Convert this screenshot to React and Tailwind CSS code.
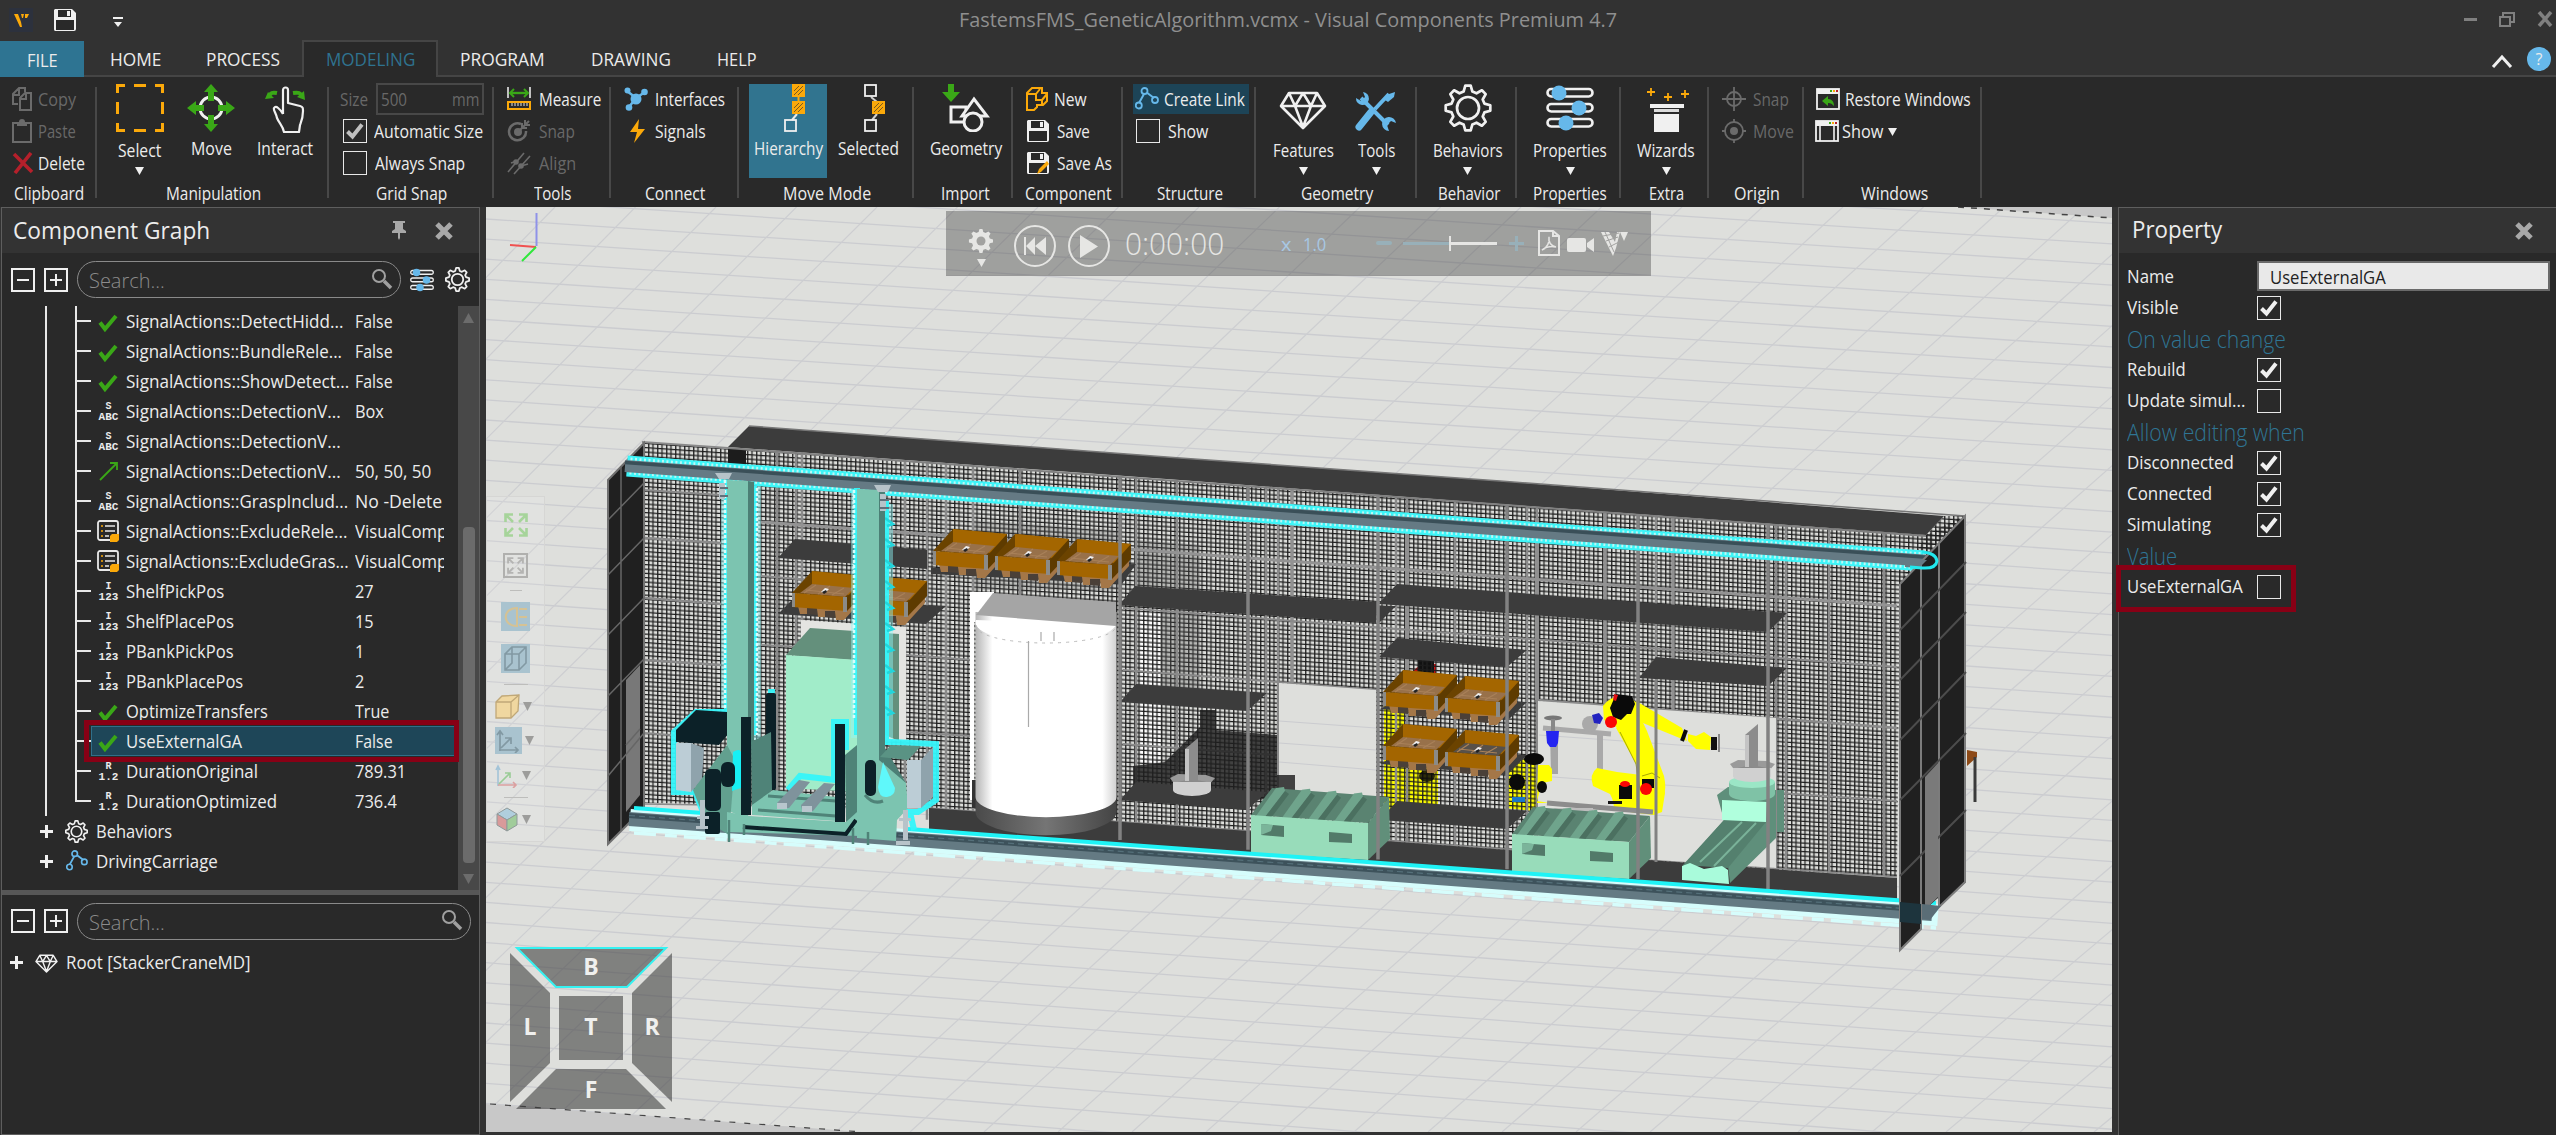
import React, { useLayoutEffect, useRef, useState } from "react";

/* Text squeezed or stretched horizontally to fill the width set by its classes. */
function T({ className = "", children }) {
  const outer = useRef(null);
  const inner = useRef(null);
  const [scale, setScale] = useState(1);
  useLayoutEffect(() => {
    if (outer.current && inner.current && inner.current.offsetWidth) {
      setScale(outer.current.clientWidth / inner.current.offsetWidth);
    }
  }, [children]);
  return (
    <span ref={outer} className={"block shrink-0 whitespace-nowrap " + className}>
      <span ref={inner} className="inline-block origin-left" style={{ transform: `scaleX(${scale})` }}>
        {children}
      </span>
    </span>
  );
}

/* ---------- icons ---------- */
const Svg = ({ s = 24, w, h, vb, children, className = "" }) => (
  <svg width={w || s} height={h || s} viewBox={vb || `0 0 ${w || s} ${h || s}`} className={"shrink-0 " + className} fill="none">
    {children}
  </svg>
);

const SaveIcon = ({ pencil }) => (
  <Svg>
    <path d="M2 1h17l4 4v16a2 2 0 0 1-2 2H2a2 2 0 0 1-1-2V2z" fill="#f0f0f0" />
    <rect x="5" y="2" width="13" height="7" fill="#292929" />
    <rect x="14" y="3" width="3" height="5" fill="#f0f0f0" />
    <rect x="3" y="12" width="18" height="10" fill="#292929" />
    {pencil && <path d="M11 23l2-5 8-8 2 3-8 8z" fill="#fba90a" />}
  </Svg>
);

const CopyIcon = () => (
  <Svg w={20} h={24}>
    <path d="M6 17H1V7l6-6h6v4M1 8h6V1M8 23V11l5-5h6v17zM8 12h6V6" stroke="#6b6b6b" strokeWidth="2" />
  </Svg>
);
const PasteIcon = () => (
  <Svg w={20} h={24}>
    <path d="M1 4h18v19H1z" stroke="#6b6b6b" strokeWidth="2" />
    <path d="M5 3h2a3 3 0 0 1 6 0h2v4H5z" fill="#6b6b6b" />
  </Svg>
);
const DeleteIcon = () => (
  <Svg w={22} h={22}>
    <path d="M2 2l18 18M19 1L3 21" stroke="#b5202b" strokeWidth="3.600" />
  </Svg>
);
const SelectIcon = () => (
  <Svg s={48}>
    <path d="M1.500 9V1.500H9M18 1.500h12M39 1.500h7.500V9M46.500 18v12M46.500 39v7.500H39M30 46.500H18M9 46.500H1.500V39M1.500 30V18" stroke="#fba90a" strokeWidth="3" />
  </Svg>
);
const MoveIcon = () => (
  <Svg s={48}>
    <circle cx="24" cy="24" r="11" stroke="#f0f0f0" strokeWidth="3" />
    <path d="M24 0l7 8h-4v9h-6V8h-4zM24 48l7-8h-4v-9h-6v9h-4zM0 24l9-7v4h8v6H9v4zM48 24l-9-7v4h-8v6h8v4z" fill="#3aa717" />
  </Svg>
);
const InteractIcon = () => (
  <Svg s={48} className="translate-x-[3px] translate-y-[1px]">
    <path d="M19 29V5a2.500 2.500 0 0 1 5 0v13l12 3c3 1 3 2 3 5 0 7-1 9-3 14l-1 7H20c-1-6-5-9-7-14-1-5-4-8-3-10 2-3 6 1 9 6" stroke="#f0f0f0" strokeWidth="2.200" strokeLinejoin="round" />
    <path d="M13 8C8 7 7 8 5 11M29 8c6-1 7 0 9 3" stroke="#3aa717" strokeWidth="4" />
    <path d="M1 14l3-7 6 6zM41 15l-1-9-7 6z" fill="#3aa717" />
  </Svg>
);
const MeasureIcon = () => (
  <Svg>
    <path d="M1 0v11M23 0v11" stroke="#e8e8e8" strokeWidth="1.600" />
    <path d="M4 6h16" stroke="#3aa717" strokeWidth="2.400" />
    <path d="M7 2L3 6l4 4M17 2l4 4-4 4" stroke="#3aa717" strokeWidth="2" />
    <rect x="1" y="15" width="22" height="7" stroke="#fba90a" strokeWidth="2" />
    <path d="M5 16v3M8 16v3M11 16v3M14 16v3M17 16v3M20 16v3" stroke="#e8e8e8" />
  </Svg>
);
const TargetSnapIcon = () => (
  <Svg>
    <path d="M14 5a8.500 8.500 0 1 0 5 7" stroke="#6b6b6b" strokeWidth="2.500" />
    <circle cx="11" cy="13" r="4" fill="#6b6b6b" />
    <path d="M12 12L22 2M15 4v5h5M18 1v5h5" stroke="#6b6b6b" strokeWidth="2" />
  </Svg>
);
const AlignIcon = () => (
  <Svg>
    <path d="M1 21L17 2M7 23L23 5" stroke="#6b6b6b" strokeWidth="1.600" />
    <path d="M4 12l6-2M14 15l7-2" stroke="#6b6b6b" strokeWidth="1.600" />
    <circle cx="9" cy="11" r="2.800" fill="#6b6b6b" />
    <circle cx="14" cy="15" r="2.800" fill="#6b6b6b" />
  </Svg>
);
const InterfacesIcon = () => (
  <Svg>
    <path d="M3 4l9 7 9-6M12 11L5 20" stroke="#66b8ea" strokeWidth="2.500" />
    <circle cx="12" cy="12" r="5.500" fill="#66b8ea" />
    <circle cx="3.500" cy="3.500" r="3" fill="#66b8ea" />
    <circle cx="20.500" cy="5" r="3.300" fill="#66b8ea" />
    <circle cx="5" cy="20.500" r="3.300" fill="#66b8ea" />
  </Svg>
);
const SignalIcon = () => (
  <Svg>
    <path d="M15 0L6 13h7l-3 11 11-14h-7z" fill="#fba90a" />
  </Svg>
);
const Hatch = ({ x, y }) => (
  <g>
    <rect x={x} y={y} width="13" height="13" fill="#fba90a" />
    <path d={`M${x + 2} ${y + 7}l5-5M${x + 2} ${y + 11}l9-9M${x + 6} ${y + 11}l5-5`} stroke="#7a5a20" />
  </g>
);
const HierarchyIcon = () => (
  <Svg s={48}>
    <path d="M34.500 13v5" stroke="#fba90a" strokeWidth="2" />
    <path d="M33 30l-5 6" stroke="#e8e8e8" strokeWidth="2" />
    <Hatch x={28} y={0} />
    <Hatch x={28} y={17} />
    <rect x="21" y="36" width="11" height="11" stroke="#f0f0f0" strokeWidth="1.800" />
  </Svg>
);
const SelectedIcon = () => (
  <Svg s={48}>
    <path d="M27 13l6 5M33 30l-5 6" stroke="#cfcfcf" strokeWidth="2" />
    <rect x="21" y="1" width="11" height="11" stroke="#f0f0f0" strokeWidth="1.800" />
    <Hatch x={28} y={17} />
    <rect x="21" y="36" width="11" height="11" stroke="#f0f0f0" strokeWidth="1.800" />
  </Svg>
);
const GeometryIcon = () => (
  <Svg s={48}>
    <path d="M4 0h6v8h6L7 18-2 8h6z" fill="#3aa717" transform="translate(2)" />
    <rect x="9" y="23" width="15" height="15" stroke="#f0f0f0" strokeWidth="3" />
    <path d="M32 15L20 32h25z" fill="#292929" stroke="#f0f0f0" strokeWidth="3" />
    <circle cx="31" cy="38" r="9" fill="#292929" stroke="#f0f0f0" strokeWidth="3" />
  </Svg>
);
const NewIcon = () => (
  <Svg w={22} h={24}>
    <path d="M1 23V6l5-5h10v5h5v8l-4 4h-6v2l-3 3zM1 7h9v6h6v5M10 7l4-5M16 13l5-6" stroke="#fba90a" strokeWidth="2" />
  </Svg>
);
const LinkIcon = ({ s = 24, fill = "#1d4457" }) => (
  <Svg s={s} vb="0 0 24 24">
    <path d="M4 16L9 7M11 5l8 6" stroke="#66b8ea" strokeWidth="2" />
    <circle cx="9.500" cy="4" r="3" stroke="#66b8ea" strokeWidth="1.800" fill={fill} />
    <circle cx="3.800" cy="18.500" r="3" stroke="#66b8ea" strokeWidth="1.800" />
    <circle cx="20" cy="13" r="3" stroke="#66b8ea" strokeWidth="1.800" />
  </Svg>
);
const DiamondIcon = ({ s = 48, sw = 2.6 }) => (
  <Svg s={s} vb="0 0 48 48">
    <path d="M10 9h28l8 13-22 22L2 22zM2 22h44M16 22l8 21 8-21M10 9l6 13 8-13 8 13 6-13" stroke="#f0f0f0" strokeWidth={sw} strokeLinejoin="round" />
  </Svg>
);
const ToolsIcon = () => (
  <Svg s={48} className="-translate-x-[1px]">
    <path d="M10 14l27 27M38 10L24 25" stroke="#66b8ea" strokeWidth="4" />
    <path d="M20 28L8 43" stroke="#66b8ea" strokeWidth="7" strokeLinecap="round" />
    <path d="M44 8l-6 2-4 6 3 2 6-5z" fill="#66b8ea" />
    <path d="M12 8a6.500 6.500 0 1 1-7 6l5 3 4-4z" fill="#66b8ea" />
    <path d="M38 47a7 7 0 1 1 7-8l-5-2-4 4z" fill="#66b8ea" />
  </Svg>
);
const gearPath = (() => {
  const pts = [];
  const n = 8;
  for (let i = 0; i < n; i++) {
    const a = (i * Math.PI * 2) / n - Math.PI / 2;
    [[-0.26, 17], [-0.12, 22.5], [0.12, 22.5], [0.26, 17]].forEach(([d, r]) => {
      pts.push(`${(24 + Math.cos(a + d) * r).toFixed(1)} ${(24 + Math.sin(a + d) * r).toFixed(1)}`);
    });
  }
  return "M" + pts.join("L") + "z";
})();
const GearIcon = ({ s = 48, sw = 2.7 }) => (
  <Svg s={s} vb="0 0 48 48">
    <path d={gearPath} stroke="#f0f0f0" strokeWidth={sw} strokeLinejoin="round" />
    <circle cx="24" cy="24" r="11" stroke="#f0f0f0" strokeWidth={sw} />
  </Svg>
);
const SlidersIcon = ({ s = 48 }) => (
  <Svg s={s} vb="0 0 48 48">
    {[9, 24, 39].map((y) => (
      <rect key={y} x="1.500" y={y - 4} width="45" height="7.500" rx="3.700" stroke="#f0f0f0" strokeWidth="2.600" />
    ))}
    <circle cx="13" cy="9" r="7.500" fill="#66b8ea" />
    <circle cx="33" cy="24" r="7.500" fill="#66b8ea" />
    <circle cx="20" cy="39" r="7.500" fill="#66b8ea" />
  </Svg>
);
const WizardIcon = () => (
  <Svg s={48}>
    <path d="M9 4v8M5 8h8M26 9v8M22 13h8M43 6v8M39 10h8" stroke="#fba90a" strokeWidth="1.800" />
    <rect x="8" y="20" width="34" height="4" fill="#f0f0f0" />
    <rect x="12" y="25" width="25" height="3" fill="#dcdcdc" />
    <rect x="12" y="30" width="25" height="18" fill="#f0f0f0" />
  </Svg>
);
const OriginIcon = ({ dot }) => (
  <Svg>
    <circle cx="12" cy="12" r={dot ? 9 : 7} stroke="#6b6b6b" strokeWidth="1.800" />
    {dot ? <path d="M12 0v4M12 20v4M0 12h4M20 12h4" stroke="#6b6b6b" strokeWidth="1.800" /> : <path d="M12 0v24M0 12h24" stroke="#6b6b6b" strokeWidth="1.800" />}
    {dot && <circle cx="12" cy="12" r="4" fill="#6b6b6b" />}
  </Svg>
);
const WindowIcon = ({ show }) => (
  <Svg>
    <rect x="1" y="2" width="22" height="20" stroke="#f0f0f0" strokeWidth="1.800" />
    <rect x="1" y="2" width="22" height="5" fill="#f0f0f0" />
    <rect x="14" y="3" width="2" height="2" fill="#3aa717" />
    <rect x="17" y="3" width="2" height="2" fill="#fba90a" />
    <rect x="20" y="3" width="2" height="2" fill="#b5202b" />
    {show ? <path d="M5 7v15M19 7v15" stroke="#f0f0f0" strokeWidth="1.600" /> : <path d="M6 14l6-5v3c4 0 6 3 6 7-2-2-3-3-6-3v3z" fill="#3aa717" />}
  </Svg>
);
const Caret = ({ className = "" }) => (
  <svg width="9" height="8" viewBox="0 0 9 8" className={"shrink-0 " + className}>
    <path d="M0 0h9L4.500 8z" fill="#f0f0f0" />
  </svg>
);
const Magnifier = () => (
  <Svg s={22} className="-mt-1">
    <circle cx="8" cy="8" r="6" stroke="#a0a0a0" strokeWidth="2" />
    <path d="M13 13l7 7" stroke="#a0a0a0" strokeWidth="3.500" />
  </Svg>
);
const CloseX = () => (
  <Svg s={18}>
    <path d="M2 2l14 14M16 2L2 16" stroke="#a8a8a8" strokeWidth="5" />
  </Svg>
);
const GreenCheck = () => (
  <Svg w={21} h={20} className="translate-x-[1px] translate-y-[1.5px]">
    <path d="M2 10l5 6.500L18 3.500" stroke="#3aa717" strokeWidth="4" />
  </Svg>
);

/* ---------- small controls ---------- */
function Check({ on, dim }) {
  return (
    <span className="flex h-6 w-6 shrink-0 items-center justify-center border-[1.5px] border-[#e8e8e8]">
      {on && (
        <svg width="18" height="18" viewBox="0 0 18 18" fill="none">
          <path d="M1.500 9.500l5 5L16 2.500" stroke={dim ? "#c0c0c0" : "#f0f0f0"} strokeWidth="4" />
        </svg>
      )}
    </span>
  );
}

function Group({ className, label, children }) {
  return (
    <section className={"flex h-[130px] shrink-0 " + className}>
      <div className="flex min-w-0 flex-1 flex-col">
        <div className="flex h-[103px]">{children}</div>
        <div className="flex h-[26px] items-center justify-center pl-[2px]">{label}</div>
      </div>
      <div className="mt-[10px] h-[111px] w-[2px] shrink-0 bg-[#484848]" />
    </section>
  );
}

function Big({ className, icon, caret, active, children }) {
  return (
    <div className={"mt-[7px] flex h-[94px] shrink-0 flex-col items-center " + (active ? "bg-[#31748f] " : "") + className}>
      {icon}
      <div className={caret ? "mt-[6px] flex h-6 items-center" : "mt-[4px] flex h-6 items-center"}>{children}</div>
      {caret && <Caret className="mt-[5px]" />}
    </div>
  );
}

const Row = ({ className = "", children }) => <div className={"flex h-[32.3px] items-center " + className}>{children}</div>;
const Rows = ({ className = "", children }) => <div className={"flex flex-col pt-[5.5px] " + className}>{children}</div>;

/* ---------- top bars ---------- */
function TitleBar() {
  return (
    <header className="flex h-[40px] items-center">
      <div className="ml-[9px] flex h-6 w-6 items-center justify-center bg-[#2c313d]">
        <svg width="18" height="18" viewBox="0 0 18 18">
          <path d="M2 3h4l3 8 1 5H8zM9 3h3l-1 4h-1zM13 3h4l-2 4h-2z" fill="#fba90a" />
        </svg>
      </div>
      <div className="ml-5 flex"><SaveIcon /></div>
      <svg width="10" height="10" viewBox="0 0 10 10" className="ml-9 mt-1">
        <path d="M0 0h10v2H0zM1 5h8L5 10z" fill="#f0f0f0" />
      </svg>
      <div className="ml-[836px] text-xl text-[#8f8f8f]">
        <T className="w-[658px]">FastemsFMS_GeneticAlgorithm.vcmx - Visual Components Premium 4.7</T>
      </div>
      <div className="ml-auto mr-[3px] flex items-center gap-[22px] pb-[2px]">
        <div className="h-[3px] w-[13px] bg-[#808080]" />
        <svg width="16" height="16" viewBox="0 0 16 16" fill="none" stroke="#808080">
          <path d="M4 5V2h11v9h-3" strokeWidth="2" />
          <rect x="1" y="6" width="10" height="9" strokeWidth="2" />
        </svg>
        <svg width="16" height="16" viewBox="0 0 16 16" fill="none">
          <path d="M2 1l12 14M14 1L2 15" stroke="#808080" strokeWidth="3.500" />
        </svg>
      </div>
    </header>
  );
}

function Tabs() {
  return (
    <nav className="flex h-[37px] items-stretch text-lg">
      <div className="mt-px flex w-[84px] items-center justify-center bg-[#2e7492] pt-[2px]"><T className="w-[31px]">FILE</T></div>
      <div className="flex flex-1 items-center border-b-2 border-[#454545] pl-[26px] pt-[2px]">
        <T className="w-[51px]">HOME</T>
        <T className="ml-[45px] w-[74px]">PROCESS</T>
      </div>
      <div className="-mb-[1px] flex w-[136px] shrink-0 items-center justify-center border-2 border-b-0 border-[#454545] bg-[#292929] pb-[2px] text-[#2f7390]">
        <T className="w-[89px]">MODELING</T>
      </div>
      <div className="flex w-[2118px] shrink-0 items-center border-b-2 border-[#454545] pl-[22px] pt-[2px]">
        <T className="w-[85px]">PROGRAM</T>
        <T className="ml-[46px] w-[80px]">DRAWING</T>
        <T className="ml-[46px] w-[40px]">HELP</T>
        <svg width="22" height="14" viewBox="0 0 22 14" fill="none" className="ml-auto mt-1">
          <path d="M2 13l9-10 9 10" stroke="#f0f0f0" strokeWidth="3" />
        </svg>
        <div className="ml-[14px] mr-[5px] flex h-6 w-6 items-center justify-center rounded-full bg-[#66b8ea] text-base">?</div>
      </div>
    </nav>
  );
}

function Ribbon() {
  return (
    <div className="flex h-[130px] bg-[#292929] text-[17.5px]">
      <Group className="w-[97px]" label={<T className="w-[70px]">Clipboard</T>}>
        <Rows className="pl-3">
          <Row className="text-[#686868]"><CopyIcon /><T className="ml-[6px] w-[38px]">Copy</T></Row>
          <Row className="text-[#686868]"><PasteIcon /><T className="ml-[6px] w-[38px]">Paste</T></Row>
          <Row><DeleteIcon /><T className="ml-1 w-[47px]">Delete</T></Row>
        </Rows>
      </Group>
      <Group className="w-[232px]" label={<T className="w-[95px]">Manipulation</T>}>
        <Big className="w-[85px]" icon={<SelectIcon />} caret><T className="w-[43px]">Select</T></Big>
        <Big className="w-[58px]" icon={<MoveIcon />}><T className="w-[41px]">Move</T></Big>
        <Big className="w-[90px]" icon={<InteractIcon />}><T className="w-[56px]">Interact</T></Big>
      </Group>
      <Group className="w-[165px]" label={<T className="w-[71px]">Grid Snap</T>}>
        <Rows className="pl-[11px]">
          <Row className="text-[#686868]">
            <T className="w-[28px]">Size</T>
            <div className="ml-2 flex h-8 w-[108px] items-center justify-between border-2 border-[#484848] px-[3px]">
              <T className="w-[26px]">500</T><T className="w-[27px]">mm</T>
            </div>
          </Row>
          <Row className="pl-[3px]"><Check on dim /><T className="ml-[7px] w-[109px]">Automatic Size</T></Row>
          <Row className="pl-[3px]"><Check /><T className="ml-2 w-[90px]">Always Snap</T></Row>
        </Rows>
      </Group>
      <Group className="w-[117px]" label={<T className="w-[37px]">Tools</T>}>
        <Rows className="pl-[13px]">
          <Row><MeasureIcon /><T className="ml-2 w-[62px]">Measure</T></Row>
          <Row className="text-[#686868]"><TargetSnapIcon /><T className="ml-2 w-[36px]">Snap</T></Row>
          <Row className="text-[#686868]"><AlignIcon /><T className="ml-2 w-[37px]">Align</T></Row>
        </Rows>
      </Group>
      <Group className="w-[128px]" label={<T className="w-[60px]">Connect</T>}>
        <Rows className="pl-[13px]">
          <Row><InterfacesIcon /><T className="ml-[7px] w-[70px]">Interfaces</T></Row>
          <Row><SignalIcon /><T className="ml-[7px] w-[51px]">Signals</T></Row>
        </Rows>
      </Group>
      <Group className="w-[175px]" label={<T className="w-[88px]">Move Mode</T>}>
        <Big active className="ml-[10px] w-[78px]" icon={<HierarchyIcon />}><T className="w-[69px]">Hierarchy</T></Big>
        <Big className="w-[82px]" icon={<SelectedIcon />}><T className="w-[61px]">Selected</T></Big>
      </Group>
      <Group className="w-[99px]" label={<T className="ml-1 w-[49px]">Import</T>}>
        <Big className="ml-[2px] w-[99px]" icon={<GeometryIcon />}><T className="w-[72px]">Geometry</T></Big>
      </Group>
      <Group className="w-[110px]" label={<T className="w-[87px]">Component</T>}>
        <Rows className="pl-[13px]">
          <Row><NewIcon /><T className="ml-[6px] w-[33px]">New</T></Row>
          <Row><SaveIcon /><T className="ml-[7px] w-[33px]">Save</T></Row>
          <Row><SaveIcon pencil /><T className="ml-[7px] w-[55px]">Save As</T></Row>
        </Rows>
      </Group>
      <Group className="w-[133px]" label={<T className="w-[66px]">Structure</T>}>
        <Rows className="pl-[10px]">
          <Row><div className="flex h-[30px] w-[116px] items-center bg-[#1d4457] pl-[2px]"><LinkIcon /><T className="ml-[5px] w-[81px]">Create Link</T></div></Row>
          <Row className="pl-[3px]"><Check /><T className="ml-2 w-[40px]">Show</T></Row>
        </Rows>
      </Group>
      <Group className="w-[161px]" label={<T className="w-[72px]">Geometry</T>}>
        <Big className="ml-[7px] w-[80px]" icon={<DiamondIcon />} caret><T className="w-[61px]">Features</T></Big>
        <Big className="w-[66px]" icon={<ToolsIcon />} caret><T className="w-[37px]">Tools</T></Big>
      </Group>
      <Group className="w-[100px]" label={<T className="ml-[3px] w-[62px]">Behavior</T>}>
        <Big className="ml-[2px] w-[97px]" icon={<GearIcon />} caret><T className="w-[70px]">Behaviors</T></Big>
      </Group>
      <Group className="w-[104px]" label={<T className="ml-[2px] w-[74px]">Properties</T>}>
        <Big className="w-[106px]" icon={<SlidersIcon />} caret><T className="w-[74px]">Properties</T></Big>
      </Group>
      <Group className="w-[88px]" label={<T className="ml-[2px] w-[35px]">Extra</T>}>
        <Big className="w-[90px]" icon={<WizardIcon />} caret><T className="w-[58px]">Wizards</T></Big>
      </Group>
      <Group className="w-[95px]" label={<T className="w-[46px]">Origin</T>}>
        <Rows className="pl-[13px] text-[#686868]">
          <Row><OriginIcon /><T className="ml-[7px] w-[36px]">Snap</T></Row>
          <Row><OriginIcon dot /><T className="ml-[7px] w-[41px]">Move</T></Row>
        </Rows>
      </Group>
      <Group className="w-[178px]" label={<T className="ml-[2px] w-[67px]">Windows</T>}>
        <Rows className="pl-[11px]">
          <Row className="pl-[1px]"><WindowIcon /><T className="ml-[5px] w-[126px]">Restore Windows</T></Row>
          <Row><WindowIcon show /><T className="ml-[3px] w-[41px]">Show</T><Caret className="ml-[5px] mt-[2px]" /></Row>
        </Rows>
      </Group>
    </div>
  );
}

/* ---------- component graph ---------- */
const TypeIcon = ({ top, bottom }) => (
  <span className="flex w-[21px] translate-x-[1px] translate-y-[1px] flex-col items-center font-['Liberation_Mono'] text-[10px] font-bold leading-[10px]">
    <span>{top}</span>
    <span className="text-[11px]">{bottom}</span>
  </span>
);
const ListIcon = () => (
  <Svg s={22}>
    <rect x="1" y="1" width="20" height="19" rx="2" stroke="#e8e8e8" strokeWidth="1.800" />
    <path d="M8 6h10M8 11h10M8 16h4" stroke="#e8e8e8" strokeWidth="1.600" />
    <path d="M4 6h2M4 11h2M4 16h2" stroke="#fba90a" strokeWidth="1.600" />
    <path d="M13 16l2-2h7v6l-2 2h-7z" fill="#fba90a" />
  </Svg>
);
const VectorIcon = () => (
  <Svg w={20} h={20} className="translate-x-[2px]">
    <path d="M1 19L18 2M11 2h7v7" stroke="#3aa717" strokeWidth="1.800" />
  </Svg>
);
const iconOf = {
  b: <GreenCheck />,
  s: <TypeIcon top="S" bottom="ABC" />,
  v: <VectorIcon />,
  l: <ListIcon />,
  i: <TypeIcon top="I" bottom="123" />,
  r: <TypeIcon top="R" bottom="1.2" />,
};
const tree = [
  ["b", "SignalActions::DetectHidd...", "w-[217px]", "False", "w-[38px]"],
  ["b", "SignalActions::BundleRele...", "w-[216px]", "False", "w-[38px]"],
  ["b", "SignalActions::ShowDetect...", "w-[223px]", "False", "w-[38px]"],
  ["s", "SignalActions::DetectionV...", "w-[215px]", "Box", "w-[29px]"],
  ["s", "SignalActions::DetectionV...", "w-[215px]", "", ""],
  ["v", "SignalActions::DetectionV...", "w-[215px]", "50, 50, 50", "w-[76px]"],
  ["s", "SignalActions::GraspInclud...", "w-[222px]", "No -Delete", "w-[87px]"],
  ["l", "SignalActions::ExcludeRele...", "w-[221px]", "VisualComp", "w-[92px]"],
  ["l", "SignalActions::ExcludeGras...", "w-[223px]", "VisualComp", "w-[92px]"],
  ["i", "ShelfPickPos", "w-[98px]", "27", "w-[19px]"],
  ["i", "ShelfPlacePos", "w-[108px]", "15", "w-[19px]"],
  ["i", "PBankPickPos", "w-[108px]", "1", "w-[9px]"],
  ["i", "PBankPlacePos", "w-[117px]", "2", "w-[9px]"],
  ["b", "OptimizeTransfers", "w-[142px]", "True", "w-[34px]"],
  ["b", "UseExternalGA", "w-[116px]", "False", "w-[38px]"],
  ["r", "DurationOriginal", "w-[132px]", "789.31", "w-[51px]"],
  ["r", "DurationOptimized", "w-[151px]", "736.4", "w-[42px]"],
];

function ExpandButtons() {
  return (
    <>
      <span className="ml-[9px] flex h-6 w-6 items-center justify-center border-2 border-[#f0f0f0]"><span className="h-[2px] w-3 bg-[#f0f0f0]" /></span>
      <span className="ml-[9px] flex h-6 w-6 items-center justify-center border-2 border-[#f0f0f0]">
        <svg width="12" height="12" viewBox="0 0 12 12"><path d="M5 0h2v5h5v2H7v5H5V7H0V5h5z" fill="#f0f0f0" /></svg>
      </span>
    </>
  );
}
function SearchBox({ className }) {
  return (
    <div className={"ml-[9px] flex h-[37px] items-center justify-between rounded-full border-[1.5px] border-[#8a8a8a] pl-[11px] pr-[7px] pt-[2px] text-[21px] font-light text-[#8c8c8c] " + className}>
      <T className="w-[76px]">Search...</T>
      <Magnifier />
    </div>
  );
}
const Plus = () => (
  <svg width="13" height="13" viewBox="0 0 13 13" className="shrink-0"><path d="M5 0h3v5h5v3H8v5H5V8H0V5h5z" fill="#f0f0f0" /></svg>
);

function ComponentGraph() {
  return (
    <aside className="ml-[1px] flex w-[479px] shrink-0 flex-col border border-[#5e5e5e] bg-[#292929] text-lg">
      <div className="flex h-[45px] shrink-0 items-center bg-[#333333] pb-[1px] pl-[11px] text-[23.5px]">
        <T className="w-[197px]">Component Graph</T>
        <svg width="16" height="20" viewBox="0 0 16 20" className="ml-[181px]">
          <path d="M2 1h12v2h-2v6l3 2v2H9v5l-1 2-1-2v-5H1v-2l3-2V3H2z" fill="#a8a8a8" />
        </svg>
        <div className="ml-[28px] mt-[1px]"><CloseX /></div>
      </div>
      <div className="flex h-[53px] shrink-0 items-center">
        <ExpandButtons />
        <SearchBox className="w-[324px]" />
        <div className="ml-[9px]"><SlidersIcon s={24} /></div>
        <div className="ml-[11px]"><GearIcon s={25} sw={3.4} /></div>
      </div>
      <div className="flex h-[584px] shrink-0">
        <div className="flex w-[456px] flex-col">
          {tree.map(([k, name, w, val, vw], i) => {
            const sel = name === "UseExternalGA";
            const last = i === tree.length - 1;
            return (
              <div key={i} className="relative flex h-[30px] shrink-0 items-center">
                <div className="ml-[43px] h-full w-[2px] self-start bg-[#e8e8e8]" />
                <div className={"ml-[28px] w-[2px] self-start bg-[#e8e8e8] " + (last ? "h-[16px]" : "h-full")} />
                <div className="h-[2px] w-[14px] bg-[#e8e8e8]" />
                <div className={"flex h-full w-[363px] items-center border-y border-l pl-[5px] " + (sel ? "border-[#2f6f8a] bg-[#1e4658]" : "border-transparent")}>
                  <div className="flex w-[29px] items-center">{iconOf[k]}</div>
                  <div className="w-[229px]"><T className={w}>{name}</T></div>
                  <div className="w-[89px] overflow-hidden">{val && <T className={vw}>{val}</T>}</div>
                </div>
                {sel && <div className="absolute -top-[6px] left-[82px] z-10 h-[42px] w-[375px] border-[5px] border-[#880015]" />}
              </div>
            );
          })}
          <div className="flex h-[30px] items-center pl-[38px]"><Plus /><div className="ml-[12px]"><GearIcon s={23} sw={3.4} /></div><T className="ml-[8px] w-[76px]">Behaviors</T></div>
          <div className="flex h-[30px] items-center pl-[38px]"><Plus /><div className="ml-[13px]"><LinkIcon s={22} fill="#292929" /></div><T className="ml-[8px] w-[122px]">DrivingCarriage</T></div>
        </div>
        <div className="flex w-[21px] flex-col items-center bg-[#484848] pt-[7px]">
          <svg width="11" height="10" viewBox="0 0 11 10"><path d="M0 10h11L5.500 0z" fill="#6c6c6c" /></svg>
          <div className="mt-[204px] h-[336px] w-3 rounded bg-[#6b6b6b]" />
          <svg width="11" height="10" viewBox="0 0 11 10" className="mt-[11px]"><path d="M0 0h11L5.500 10z" fill="#6c6c6c" /></svg>
        </div>
      </div>
      <div className="h-[5px] shrink-0 bg-[#575757]" />
      <div className="mt-[1px] flex h-[50px] shrink-0 items-center">
        <ExpandButtons />
        <SearchBox className="w-[394px]" />
      </div>
      <div className="mt-[1px] flex h-[30px] items-center pl-2"><Plus /><div className="ml-3"><DiamondIcon s={23} sw={3} /></div><T className="ml-[8px] w-[185px]">Root [StackerCraneMD]</T></div>
    </aside>
  );
}

/* ---------- property panel ---------- */
const PropRow = ({ label, w, on, mark }) => (
  <div className="relative flex h-[31px] items-center pl-2">
    <div className="w-[130px]"><T className={w}>{label}</T></div>
    <Check on={on} />
    {mark && <div className="absolute -left-[3px] -top-[6px] h-[47px] w-[180px] border-[5px] border-[#880015]" />}
  </div>
);
const Section = ({ label, w }) => (
  <div className="flex h-[31px] items-center pl-2 pt-[2px] text-[23.5px] font-light text-[#2f7594]"><T className={w}>{label}</T></div>
);

function PropertyPanel() {
  return (
    <aside className="flex flex-1 flex-col border-l border-t border-[#5e5e5e] bg-[#292929] text-[17.5px]">
      <div className="flex h-[45px] items-center bg-[#333333] pb-[1px] pl-[13px] text-[23.5px]">
        <T className="w-[90px]">Property</T>
        <div className="ml-auto mr-[23px] mt-[1px]"><CloseX /></div>
      </div>
      <div className="flex h-[39px] items-center pl-2 pt-[7px]">
        <div className="w-[130px]"><T className="w-[47px]">Name</T></div>
        <div className="flex h-[30px] w-[293px] items-center border-2 border-[#6a6a6a] bg-[#e9e9e9] pl-[11px] pt-[2px] text-[#222]"><T className="w-[116px]">UseExternalGA</T></div>
      </div>
      <PropRow label="Visible" w="w-[52px]" on />
      <Section label="On value change" w="w-[159px]" />
      <PropRow label="Rebuild" w="w-[59px]" on />
      <PropRow label="Update simul..." w="w-[118px]" />
      <Section label="Allow editing when" w="w-[178px]" />
      <PropRow label="Disconnected" w="w-[107px]" on />
      <PropRow label="Connected" w="w-[85px]" on />
      <PropRow label="Simulating" w="w-[84px]" on />
      <Section label="Value" w="w-[50px]" />
      <PropRow label="UseExternalGA" w="w-[116px]" mark />
    </aside>
  );
}

/* ---------- 3D scene ---------- */
const P = ({ p, f, s, sw, o }) => <polygon points={p} fill={f || "none"} stroke={s} strokeWidth={sw} opacity={o} />;
const L = ({ p, s = "#8a8a8a", w = 2, o }) => <polyline points={p} fill="none" stroke={s} strokeWidth={w} opacity={o} />;

function Box({ x, y, dark }) {
  return (
    <g transform={`translate(${x} ${y})`}>
      <path d="M0 13l6 0 2 8h7v-6l10 1 1 8h7v-6l10 1 1 8h8l20-22v-9L55 15z" fill="#a47748" />
      <path d="M15 21v-6h10v7zM33 24v-6h10v7z" fill="#4a4038" />
      <path d="M0 0L20 -22 74 -17 55 5z" fill="#6b4300" />
      <path d="M20 -22L74 -17V-8L57 2 20 -8z" fill="#a46600" />
      <path d="M8 0L20 -9 62 -5 53 4z" fill={dark ? "#57514a" : "#98714a"} />
      <path d="M14 -3l38 4M24 -8L12 0M38 -7L26 1M52 -5L40 2" stroke="#a88058" strokeWidth="1.200" />
      <path d="M33 -5l4 1-4 4-4-1z" fill="#efefef" />
      <path d="M30 -1l4 -2 1 2-3 2z" fill="#222" />
      <path d="M55 4L74 -17V-2L55 18z" fill="#5e3b00" />
      <path d="M0 0L55 4V18L0 14z" fill="#a36500" />
      <path d="M0 0h3v14H0zM51 4h4v15h-4z" fill="#8b8b88" />
    </g>
  );
}

function GreenTable({ x, y }) {
  return (
    <g transform={`translate(${x} ${y})`}>
      <P p="0,0 21,-27 138,-18 117,8" f="#5a8371" />
      {[0, 26, 52, 78].map((d) => (
        <g key={d}>
          <path d={`M${5 + d} ${1 + d * 0.07}L${25 + d} ${-27 + d * 0.07}l8 -1 1 4L${14 + d} ${2 + d * 0.07}z`} fill="#6fa48c" />
          <path d={`M${14 + d} ${2 + d * 0.07}L${34 + d} ${-24 + d * 0.07}l4 3L${20 + d} ${3 + d * 0.07}z`} fill="#4b7060" />
        </g>
      ))}
      <P p="117,8 138,-18 139,24 117,45" f="#618f7a" />
      <P p="0,0 117,8 117,45 0,38" f="#98dcba" />
      <path d="M10 9l23 2v11l-23-2zM78 17l23 2v9l-23-1z" fill="#527a69" />
      <path d="M10 9l12 1-2 6-10 4z" fill="#7bb49a" />
    </g>
  );
}

function Fixture({ x, y }) {
  return (
    <g transform={`translate(${x} ${y})`}>
      <path d="M-15 20l8-4 28 1 9 3-7 8H-9z" fill="#9a9a9a" />
      <ellipse cx="7" cy="28" rx="19" ry="6" fill="#8a8a8a" />
      <path d="M-12 24v8a19 6 0 0 0 38 0v-8z" fill="#d0d0d0" />
      <path d="M0 -9L13 -20V24L0 22z" fill="#8c8c8c" />
      <path d="M0 -9h4V23H0z" fill="#c4c4c4" />
    </g>
  );
}

const backPosts = [777, 796, 802, 905, 927, 946, 973, 1020, 1136, 1177, 1266, 1278, 1396, 1407, 1455, 1527, 1537, 1656, 1776, 1786, 1829, 1884];
const shortPosts = [[1292, 689], [1605, 705], [1673, 710]];
const frontPosts = [1120, 1248, 1378, 1507, 1638, 1768];
const roofY = (x) => 447 + (x - 728) * 0.0735;
const backY = (x) => 803 + (x - 645) * 0.059;
const frontY = (x) => 840 + (x - 1120) * 0.0755;

function Floor() {
  const lines = [];
  for (let i = -7; i < 48; i++) {
    const y = 219 + 20.1 * i;
    const m = 0.066 + 0.0003 * i;
    lines.push(<path key={"h" + i} d={`M486 ${y}L2112 ${y + 1626 * m}`} stroke="#cbccd0" strokeWidth="1.300" />);
  }
  for (let i = -1; i < 34; i++) {
    const xt = 555 + 80.5 * i;
    const xb = -348 + 74 * i;
    lines.push(<path key={"d" + i} d={`M${xt} 207L${xb} 1132`} stroke="#cdced1" strokeWidth="1.200" />);
  }
  return (
    <g>
      <rect x="486" y="207" width="1626" height="925" fill="#dedfdc" />
      {lines}
      <P p="486,1104 862,1132 486,1132" f="#c8c8c8" />
      <path d="M490 1104L862 1132" stroke="#444" strokeWidth="1.200" strokeDasharray="6 9" />
      <P p="1958,207 2112,218 2112,207" f="#c8c8c8" />
      <path d="M1958 207L2112 218" stroke="#444" strokeWidth="1.500" strokeDasharray="6 7" />
    </g>
  );
}

function BackWall() {
  const wall = "644,442 728,449 1926,535 1965,515 1900,583 1897,877 1647,862 929,808 644,803";
  return (
    <g>
      <P p={wall} f="#dedfdc" />
      <P p="1926,535 1944,516 1965,516 1900,584" f="#dedfdc" />
      <rect x="1140" y="608" width="20" height="155" fill="#fff" />
      <path d="M1384 700h20v68h34v48l-54-6z" fill="#ffff00" />
      <path d="M1412 672q8-10 24-8v12h-24z" fill="#e01010" />
      <rect x="1418" y="660" width="16" height="14" fill="#111" />
      <path d="M1508 770l20-14 14 10v46l-36 -4z" fill="#ffff00" />
      <P p={wall} f="url(#mesh)" />
      <P p="1926,535 1944,516 1965,516 1900,584" f="url(#mesh)" />
      <P p="1137,540 1200,545 1200,690 1160,690 1160,608 1137,606" f="#555" o="0.280" />
      <P p="972,520 1120,530 1120,590 972,590" f="#555" o="0.220" />
      {backPosts.map((x) => (
        <path key={x} d={`M${x} ${roofY(x)}V${backY(x)}`} stroke="#8a8a8a" strokeWidth="2.500" />
      ))}
      {shortPosts.map(([x, b]) => (
        <path key={x} d={`M${x} ${roofY(x)}V${b}`} stroke="#909090" strokeWidth="3.500" />
      ))}
      <path d="M1537 518V700M1407 510V690" stroke="#909090" strokeWidth="4" />
      <L p="761,522 1897,606" w="3" s="#939393" />
      <L p="1123,608 1897,667" />
      <L p="1123,670 1277,682 1378,690" />
      <L p="1537,700 1897,728" w="2.500" />
      <L p="1123,744 1277,755" />
      <L p="1777,793 1897,801" />
      <L p="645,490 721,495" />
      <L p="645,538 721,543" w="2.500" />
      <L p="645,598 721,604" w="2.500" />
      <L p="645,660 721,665" w="2.500" />
      <L p="645,733 721,739" />
      <L p="761,645 800,647" />
      <L p="761,576 860,584" />
      <L p="906,655 972,660" />
      <L p="906,732 972,736" />
      <L p="642,442 728,448" />
      <L p="644,804 929,808 1897,877" w="1.500" />
      <P p="1279,683 1376,690 1376,815 1279,800" f="#dedfdc" />
      <P p="1538,701 1776,718 1776,868 1538,852" f="#dedfdc" />
      <L p="1279,721 1376,728" s="#cbccd0" w="1" />
      <L p="1279,743 1376,750" s="#cbccd0" w="1" />
      <L p="1279,762 1376,770" s="#cbccd0" w="1" />
      <L p="1539,776 1776,793" s="#cbccd0" w="1" />
      <L p="1539,735 1776,752" s="#cbccd0" w="1" />
      <L p="1656,815 1776,824" s="#cbccd0" w="1" />
      <P p="728,448 746,449 746,470 728,468" f="#1c1c1c" />
      <P p="728,447 749,426 1180,458 1500,481 1944,516 1926,535 1500,504 1180,480" f="#3c3c3c" />
      <path d="M749 426L1180 458 1500 481 1965 516" stroke="#777" strokeWidth="1.500" fill="none" />
      <path d="M728 448L1926 536" stroke="#808080" strokeWidth="2" fill="none" />
      <P p="929,808 1897,878 1897,902 929,834" f="#3c3c3c" />
    </g>
  );
}

function Shelves() {
  return (
    <g fill="#3c3c3c">
      <polygon points="778,558 795,539 927,550 927,569" />
      <polygon points="778,614 792,600 946,606 926,624" />
      <polygon points="931,568 1136,564 1122,584 931,574" />
      <polygon points="1119,605 1135,586 1378,602 1376,623" />
      <polygon points="1379,603 1397,584 1787,613 1768,632 1379,604" />
      <polygon points="1378,606 1396,606 1378,624" />
      <polygon points="1379,657 1397,638 1527,650 1507,667" />
      <polygon points="1120,702 1136,684 1267,693 1247,711" />
      <path d="M1133 766l32 -4 35 -35V710h16v20l61 5v40h18v22l-55 4-107-8z" fill="#1f1f1f" opacity="0.820" />
      <polygon points="1120,800 1136,782 1267,792 1247,810" />
      <polygon points="1380,709 1397,700 1527,702 1508,720" />
      <polygon points="1380,764 1397,755 1527,755 1507,775" />
      <polygon points="1380,820 1397,801 1527,811 1507,829" />
      <polygon points="1639,678 1656,657 1787,668 1768,686" />
    </g>
  );
}

function Tank() {
  return (
    <g>
      <rect x="972" y="592" width="22" height="30" fill="#fff" />
      <path d="M972 592V800" stroke="#fff" strokeWidth="4" />
      <path d="M972 780h6v28h-6z" fill="#333" />
      <path d="M975.500 800V812a70 23 0 0 0 141 0V800z" fill="url(#tankBase)" />
      <path d="M975.500 612V797a70 20 0 0 0 141 0V612z" fill="url(#tank)" />
      <path d="M976 620a70 20 0 0 0 140 5z" fill="#fff" />
      <path d="M976 625a70 17 0 0 0 140 2" stroke="#bbb" strokeDasharray="3 5" fill="none" />
      <P p="976,615 993,593 1116,602 1116,626" f="#a5a5a5" />
      <path d="M1028.500 641V727M1041 632v9M1054 632v9" stroke="#aaa" strokeWidth="1.200" />
    </g>
  );
}

function Robot() {
  return (
    <g>
      <g stroke="#a9a9a9" fill="none">
        <path d="M1543 728L1611 734" strokeWidth="5" />
        <path d="M1600 733V776" strokeWidth="6" />
      </g>
      <path d="M1547 730h8v44h-7z" transform="translate(3 0)" fill="#a5a5a5" />
      <ellipse cx="1553" cy="718" rx="9" ry="2.500" fill="#777" />
      <path d="M1551 719h4v12h-4z" fill="#888" />
      <path d="M1546 731h13l-1 12-2 4h-6l-3-4z" fill="#2424f0" />
      <path d="M1538 765h11l3 4v12l-10 2-5 18 12 2h-12z" fill="#ffff00" />
      <ellipse cx="1534" cy="759" rx="10" ry="6" fill="#0a0a0a" />
      <circle cx="1517" cy="782" r="8" fill="#0a0a0a" />
      <ellipse cx="1542" cy="787" rx="5" ry="6" fill="#0a0a0a" />
      <path d="M1512 797h13v5h-13z" fill="#1a77c8" />
      <ellipse cx="1427" cy="776" rx="8" ry="6" fill="#0a0a0a" opacity=".85" />
      <circle cx="1590" cy="724" r="8" fill="#a9a9a9" />
      <path d="M1592 715l7-2 4 5-3 6-6-1z" fill="#2222c0" />
      <path d="M1597 768l20 4 24 3 18-2 6 20-3 19-8 3-40-5q0-9-4-16l-17-8q-4-12 4-18z" fill="#ffff00" />
      <path d="M1616 728l19-22 12 25 17 45q3 14-1 22l-18 2-8-35z" fill="#ffff00" />
      <path d="M1636 701l46 27 5 13-49-20z" fill="#ffff00" />
      <path d="M1603 706q10-14 28-8l9 8-6 14-16 8-14-8z" fill="#ffff00" />
      <path d="M1688 734l8 2 8-4 7 5-1 13-14-1-8-8z" fill="#ffff00" />
      <path d="M1620 732l16 32 4 26" stroke="#a8a800" fill="none" />
      <path d="M1642 776l10 -3 8 5" stroke="#a8a800" fill="none" />
      <path d="M1616 694l16 2 3 8-4 10h-4l-6 6-8-3-3-9z" fill="#0a0a0a" />
      <path d="M1614 694l4 1-2 6-3-1z" fill="#e01010" />
      <circle cx="1611" cy="722" r="6" fill="#fb0505" />
      <path d="M1686 730l-4 11" stroke="#0a0a0a" strokeWidth="4" />
      <path d="M1711 737h6v13h-6z" fill="#111" />
      <path d="M1719 734v18" stroke="#888" strokeWidth="2" />
      <rect x="1619" y="785" width="13" height="14" fill="#0a0a0a" />
      <rect x="1642" y="779" width="12" height="9" fill="#0a0a0a" />
      <ellipse cx="1625" cy="784" rx="5" ry="3" fill="#fb0505" />
      <circle cx="1646" cy="789" r="6" fill="#fb0505" />
      <path d="M1547 803L1653 812" stroke="#8c8c8c" strokeWidth="5" />
      <path d="M1553 808h40v5h-30z" fill="#bdbdbd" />
      <path d="M1608 801h14v3h-14z" fill="#111" />
    </g>
  );
}

function Conveyor() {
  return (
    <g>
      <rect x="1777" y="790" width="7" height="42" fill="#5f8f7b" />
      <P p="1717,795 1728,787 1776,790 1776,838 1730,883 1728,866 1683,866 1724,820" f="#5f8f7b" />
      <P p="1683,865 1724,820 1766,822 1728,868" f="#54806e" />
      <path d="M1700 862L1742 822M1714 866L1756 823" stroke="#7ab299" strokeWidth="2" />
      <P p="1722,800 1767,802 1766,822 1722,820" f="#b0ffdd" />
      <path d="M1729 782v12a23 7 0 0 0 46 0v-12z" fill="#7fc2a6" />
      <ellipse cx="1752" cy="782" rx="23" ry="6" fill="#9be6c6" />
      <P p="1682,866 1690,863 1704,869 1722,866 1728,870 1729,884 1682,880" f="#a9fbdb" />
      <Fixture x={1745} y={744} />
    </g>
  );
}

function Crane() {
  return (
    <g>
      <g stroke="#8ff8f8" fill="none" strokeWidth="12" opacity="0.450">
        <path d="M727 484V708M755 486V740M857 490V738M887 504V742" />
      </g>
      <g stroke="#35f6fa" fill="none" strokeWidth="6" opacity="0.950">
        <path d="M727 480V712H696L674 732V792H695L703 812M754 486V735M772 732V692H768" />
        <path d="M857 488V735M886 500V742H892L936 744V800L918 812H910L914 830" />
        <path d="M834 780V722H846V750M788 790L800 776 836 780" />
      </g>
      <path d="M725 480V710M757 488V735M854 490V720" stroke="#d9fdfb" strokeWidth="2.500" strokeDasharray="3 2" />
      {[0, 1, 2, 3, 4, 5, 6, 7, 8, 9].map((i) => (
        <path key={i} d={`M885 ${518 + i * 21}l8 6-6 2`} stroke="#22d6dc" strokeWidth="2.500" fill="none" />
      ))}
      <P p="676,730 696,710 727,712 729,733 719,745 676,742" f="#0c2128" />
      <P p="676,743 691,743 691,792 676,790" f="#bccdd6" />
      <P p="691,743 704,748 702,780 691,792" f="#8fa3ac" />
      <P p="727,480 748,481 748,820 727,810" f="#7cc4b0" />
      <P p="748,481 754,482 754,742 748,745" f="#4c7f75" />
      <P p="693,790 727,745 735,760 729,835 705,820" f="#62a08f" />
      <path d="M733 752q10-6 8 6v30l-9 3z" fill="#18f0f4" />
      <rect x="721" y="762" width="14" height="25" rx="6" fill="#0c2128" />
      <rect x="705" y="769" width="16" height="42" rx="5" fill="#0c2128" />
      <rect x="705" y="812" width="15" height="22" rx="2" fill="#0c2128" />
      <rect x="766" y="693" width="10" height="97" rx="2" fill="#0c2128" />
      <P p="751,742 771,732 772,790 752,813" f="#4f8378" />
      <P p="752,805 773,790 836,797 836,821 752,815" f="#7cc4b0" />
      <path d="M768 796L836 801M758 810L836 816" stroke="#4f8378" strokeWidth="3" />
      <P p="777,803 799,780 810,782 789,808 778,808" f="#7f939c" />
      <P p="801,805 824,783 835,784 813,811 802,810" f="#7f939c" />
      <rect x="777" y="803" width="10" height="6" fill="#b8c6cd" />
      <rect x="802" y="806" width="10" height="6" fill="#b8c6cd" />
      <P p="727,812 750,816 846,822 858,806 860,836 727,832" f="#7cc4b0" />
      <path d="M743 827L846 834 856 820" stroke="#0c2128" strokeWidth="4" fill="none" />
      <rect x="741" y="717" width="10" height="98" fill="#0c2128" />
      <rect x="835" y="724" width="10" height="98" fill="#0c2128" />
      <P p="845,755 857,745 857,812 846,822" f="#4f8378" />
      <P p="857,489 879,490 879,745 906,783 908,808 897,820 896,841 857,838" f="#7cc4b0" />
      <P p="879,491 885,492 885,748 906,783 879,760" f="#4c7f75" />
      <path d="M883 762l12 26q0 8-8 9t-9-10z" fill="#5ff8fa" />
      <rect x="865" y="760" width="11" height="36" rx="5" fill="#0c2128" />
      <path d="M865 795q8 10 18 6" stroke="#4f8378" strokeWidth="3" fill="none" />
      <P p="880,757 891,745 921,746 908,760" f="#5a9384" />
      <P p="907,760 921,760 921,808 907,808" f="#bccdd6" />
      <P p="921,760 933,747 933,797 921,808" f="#8fa3ac" />
      <path d="M729 820v22M744 824v11M853 828v16M868 832v13" stroke="#4f8378" strokeWidth="2.500" />
      <g fill="#b7c3c9">
        <path d="M715 473h17l-3 6h-10zM874 485h17l-3 7h-10z" />
        <rect x="719" y="483" width="6" height="16" />
        <rect x="880" y="494" width="6" height="17" />
        <rect x="700" y="800" width="5" height="26" />
        <rect x="903" y="810" width="5" height="30" />
        <path d="M697 816h12v3h-12zM696 826h12v3h-12zM899 818h12v3h-12zM896 841h14v4h-14z" />
      </g>
      <path d="M720 488h8M720 496h8M880 500h9M880 508h9" stroke="#60707a" strokeWidth="2" />
    </g>
  );
}

function Scene() {
  return (
    <svg width="1626" height="925" viewBox="486 207 1626 925" className="block">
      <defs>
        <pattern id="mesh" width="9" height="13" patternUnits="userSpaceOnUse" patternTransform="skewY(3.9)">
          <path d="M0.700 0V13M5 0V13" stroke="#222" strokeWidth="1.300" />
          <path d="M0 0.700H9M0 5H9M0 9.300H9" stroke="#1c1c1c" strokeWidth="1.250" />
        </pattern>
        <linearGradient id="tank">
          <stop offset="0" stopColor="#b5b5b5" />
          <stop offset="0.120" stopColor="#fff" />
          <stop offset="0.900" stopColor="#fff" />
          <stop offset="1" stopColor="#d0d0d0" />
        </linearGradient>
        <linearGradient id="tankBase">
          <stop offset="0" stopColor="#4a4a4a" />
          <stop offset="0.500" stopColor="#757575" />
          <stop offset="1" stopColor="#444" />
        </linearGradient>
      </defs>
      <Floor />
      <path d="M536.500 213V246" stroke="#8f92e8" strokeWidth="2" />
      <path d="M536 247L510 245" stroke="#f05050" strokeWidth="2" />
      <path d="M536 247L522 261" stroke="#2fe83a" strokeWidth="2" />
      <BackWall />
      {/* left end wall */}
      <P p="608,480 644,443 644,808 608,844" f="#202020" s="#707070" sw="2" />
      <P p="626,680 640,665 640,795 626,812" f="#787878" />
      <path d="M621 466V830M608 520l36-37M608 575l36-37M608 635l36-37M608 696l36-37M608 776l36-43M626 745l14-16" stroke="#666" strokeWidth="1.500" fill="none" />
      <P p="801,620 906,627 906,741 801,735" f="#e4e4e1" />
      <Shelves />
      <Box x={792} y={593} />
      <Box x={853} y={598} />
      <Tank />
      <Box x={933} y={551} />
      <Box x={995} y={556} />
      <Box x={1057} y={561} />
      <Fixture x={1185} y={758} />
      <Robot />
      <Box x={1383} y={692} />
      <Box x={1445} y={698} />
      <Box x={1383} y={746} />
      <Box x={1445} y={752} dark />
      <GreenTable x={1251} y={815} />
      <GreenTable x={1512} y={834} />
      <Conveyor />
      {frontPosts.map((x) => (
        <path key={x} d={`M${x} ${roofY(x)}V${frontY(x)}`} stroke="#828282" strokeWidth="3.500" />
      ))}
      <path d="M1656 680V862" stroke="#828282" strokeWidth="3" />
      {/* green block behind the carriage */}
      <P p="786,655 810,628 899,634 852,660" f="#64907c" />
      <P p="786,655 858,660 858,792 786,788" f="#a1ecc9" />
      <P p="885,634 899,634 899,741 885,735" f="#64907c" />
      {/* upper rail */}
      <path d="M627 466L1924 561" stroke="#3df5f8" strokeWidth="21" />
      <path d="M630 466L1924 561" stroke="#b9f8f6" strokeWidth="17" strokeDasharray="2 2.500" />
      <path d="M625 466L1930 561" stroke="#657a84" strokeWidth="12" />
      <path d="M625 462.500L1930 557.500" stroke="#3a4f58" strokeWidth="3.500" />
      {/* lower rail */}
      <path d="M630 820L1938 915" stroke="#d6fdfc" strokeWidth="22" />
      <path d="M634 833L1936 928" stroke="#d6fdfc" strokeWidth="3.500" strokeDasharray="22 9 12 7" />
      <path d="M634 808L703 813M908 829L1936 903" stroke="#1ff3f6" strokeWidth="4" />
      <path d="M629 819L1932 914" stroke="#647a83" strokeWidth="14" />
      <path d="M629 815.500L1932 910.500" stroke="#3d525b" strokeWidth="5" />
      <path d="M629 815.500L1932 910.500" stroke="#55707a" strokeWidth="1.200" strokeDasharray="6 4" />
      <Crane />
      {/* right end wall */}
      <P p="1900,584 1965,516 1966,882 1939,907 1938,898 1921,913 1921,929 1900,950" f="#202020" />
      <path d="M1900 584L1965 516V882L1939 907M1900 584V950L1921 929V562M1939 544V907" stroke="#7c7c7c" strokeWidth="2" fill="none" />
      <path d="M1900 630l66-68M1900 680l66-68M1900 740l66-68M1900 800l66-67M1900 876l66-66" stroke="#4c4c4c" strokeWidth="2" />
      <P p="1925,777 1938,763 1938,897 1925,910" f="#7a7a7a" />
      <P p="1900,902 1921,904 1921,924 1900,922" f="#1d343d" />
      <path d="M1922 904L1941 906 1930 920 1922 919z" fill="#5a6d76" />
      <path d="M1905 559L1927 560 1919 568 1905 567z" fill="#657a84" />
      <path d="M1922 552q14 1 15 9-1 8-15 7l-12-1" stroke="#22e8ee" strokeWidth="3" fill="none" />
      <P p="1967,750 1977,752 1977,757 1967,766" f="#8d4a17" />
      <path d="M1975 757V802" stroke="#3a3a3a" strokeWidth="3" />
    </svg>
  );
}

/* ---------- overlays of the 3D view ---------- */
function PlayBar() {
  return (
    <div className="absolute left-[460px] top-1 flex h-[65px] w-[705px] items-start border-b border-[#999] bg-[#2b2b2b]/35 pl-[22px] text-[#e6e6e4]">
      <svg width="26" height="44" viewBox="0 0 26 44" className="mt-[17px]">
        <path d={gearPath} fill="#e6e6e4" transform="scale(.54)" />
        <circle cx="13" cy="13" r="4.500" fill="#a2a2a0" />
        <path d="M9 31h9l-4.500 8z" fill="#e6e6e4" />
      </svg>
      <svg width="42" height="42" viewBox="0 0 42 42" className="ml-5 mt-[14px]" fill="none">
        <circle cx="21" cy="21" r="20" stroke="#e6e6e4" strokeWidth="2" />
        <path d="M10 12h2v18h-2zM21 12v18l-9-9zM32 12v18l-11-9z" fill="#e6e6e4" />
      </svg>
      <svg width="42" height="42" viewBox="0 0 42 42" className="ml-3 mt-[14px]" fill="none">
        <circle cx="21" cy="21" r="20" stroke="#e6e6e4" strokeWidth="2" />
        <path d="M12 10v23l18-11.500z" fill="#e6e6e4" />
      </svg>
      <div className="ml-[15px] mt-2 text-[31px] font-light leading-[48px]"><T className="w-[99px]">0:00:00</T></div>
      <div className="ml-[57px] mt-[21px] flex gap-3 text-lg leading-6 text-[#a8c8e4]"><T className="w-[10px]">x</T><T className="w-[23px]">1.0</T></div>
      <div className="ml-[50px] mt-[24px] flex h-4 items-center">
        <div className="h-[4px] w-4 rounded bg-[#98b0b9]" />
        <div className="ml-[11px] h-[3px] w-[46px] bg-[#98b0b9]" />
        <div className="h-[15px] w-[2px] bg-[#e6e6e4]" />
        <div className="h-[3px] w-[46px] bg-[#e6e6e4]" />
        <svg width="15" height="15" viewBox="0 0 15 15" className="ml-3"><path d="M6 0h3v6h6v3H9v6H6V9H0V6h6z" fill="#98b0b9" /></svg>
      </div>
      <svg width="22" height="26" viewBox="0 0 22 26" className="ml-[14px] mt-[19px]" fill="none" stroke="#e6e6e4">
        <path d="M1 1h14l6 5v19H1zM15 1v5h6" strokeWidth="2" />
        <path d="M4 20c5-2 8-8 7-13-1 5 2 9 7 10-5-1-10 0-14 3z" strokeWidth="1.500" />
      </svg>
      <svg width="28" height="14" viewBox="0 0 28 14" className="ml-[7px] mt-[27px]">
        <rect width="19" height="14" rx="2" fill="#e6e6e4" />
        <path d="M20 5l7-5v14l-7-5z" fill="#e6e6e4" />
      </svg>
      <svg width="27" height="24" viewBox="0 0 27 24" className="ml-[6px] mt-[21px]">
        <path d="M0 0h8l6 10 2-10h3l-4 16-3 8z" fill="#e6e6e4" />
        <path d="M19 0h8l-4 9z" fill="#e6e6e4" />
        <path d="M2 4l16-3M5 9l12-4M8 15l10-5M4 0l9 20" stroke="#a2a2a0" strokeWidth="1" />
      </svg>
    </div>
  );
}

const SideCaret = () => (
  <svg width="9" height="9" viewBox="0 0 9 9" className="ml-[3px]"><path d="M0 0h9L4.500 9z" fill="#9d9d9b" /></svg>
);
const Corners = ({ c, s }) => (
  <svg width={s} height={s} viewBox="0 0 24 24" fill="none" stroke={c} strokeWidth="2.600">
    <path d="M1.500 9V1.500H9M2 2l7 7M15 1.500h7.500V9M22 2l-7 7M22.500 15v7.500H15M22 22l-7-7M9 22.500H1.500V15M2 22l7-7" />
  </svg>
);
function SideBar() {
  return (
    <div className="absolute left-0 top-[289px] flex h-[346px] w-[59px] flex-col items-center border border-[#d6d6d4] bg-white/10">
      <div className="mt-4 flex h-6 items-center"><Corners c="#a6d49a" s={24} /></div>
      <div className="mt-[16px] flex h-[25px] w-[25px] items-center justify-center border-2 border-[#b0b0ae]"><Corners c="#b4b4b2" s={17} /></div>
      <div className="mt-3 h-px w-3 bg-[#bdbdbb]" />
      <div className="mt-[11px] flex h-[29px] w-[29px] items-center justify-center bg-[#a9c3cf]">
        <svg width="24" height="20" viewBox="0 0 24 20" fill="none" stroke="#d5c294" strokeWidth="2"><path d="M13 1v18C-2 19-2 1 13 1zM15 2h8M15 10h8M15 18h8" /></svg>
      </div>
      <div className="mt-[13px] flex h-[29px] w-[29px] items-center justify-center bg-[#a9c3cf]">
        <svg width="24" height="26" viewBox="0 0 24 26" fill="none" stroke="#8299a3" strokeWidth="1.600"><path d="M1 8h14v16H1zM1 8l7-7h14v16l-7 7M15 8l7-7M8 1v16L1 24" /></svg>
      </div>
      <div className="mt-[11px] h-px w-6 bg-[#bdbdbb]" />
      <div className="mt-[9px] flex h-[25px] w-[42px] items-center">
        <svg width="25" height="25" viewBox="0 0 25 25" fill="none" stroke="#c0a878" strokeWidth="1.300"><path d="M1 8l6-6 17-1-1 16-7 7H1z" fill="#f0d7a0" /><path d="M1 8h15v16M16 8l8-7" /></svg>
        <SideCaret />
      </div>
      <div className="mt-[8px] flex h-[27px] w-[42px] items-center">
        <div className="flex h-[27px] w-[27px] items-center justify-center bg-[#a9c3cf]">
          <svg width="24" height="24" viewBox="0 0 24 24" fill="none" stroke="#8299a3" strokeWidth="1.700"><path d="M4 22V3M1 6l3-4 3 4M3 21h19M19 18l3 3-3 3M5 19L15 9M9 9h6v6" /></svg>
        </div>
        <SideCaret />
      </div>
      <div className="mt-[9px] flex h-[25px] w-[42px] items-center">
        <svg width="24" height="24" viewBox="0 0 24 24" fill="none" strokeWidth="1.600"><path d="M3 22V2M1 6l2-4 2 4" stroke="#a3c4d8" /><path d="M3 21h18M18 18l3 3-3 3" stroke="#dba0a0" /><path d="M4 20L15 9M10 9h5v5" stroke="#9acc96" /></svg>
        <SideCaret />
      </div>
      <div className="mt-[9px] h-px w-6 bg-[#bdbdbb]" />
      <div className="mt-[9px] flex h-[25px] w-[42px] items-center">
        <svg width="24" height="25" viewBox="0 0 24 25" stroke="#8f9a9a"><path d="M12 1l10 6-10 6L2 7z" fill="#b0cedd" /><path d="M2 7l10 6v11L2 18z" fill="#d99a9a" /><path d="M22 7l-10 6v11l10-6z" fill="#a0cc9a" /></svg>
        <SideCaret />
      </div>
    </div>
  );
}

function NavCube() {
  return (
    <svg width="164" height="165" viewBox="509 946 164 165" className="absolute left-[23px] top-[739px]">
      <g fill="#3c3c3c" fillOpacity="0.580">
        <polygon points="517,948 666,948 627,987 556,987" stroke="#35f2f2" strokeWidth="2" />
        <polygon points="510,953 550,993 550,1063 510,1102" />
        <polygon points="672,953 632,993 632,1063 672,1102" />
        <rect x="559" y="996" width="64" height="64" />
        <polygon points="556,1069 626,1069 666,1109 516,1109" />
      </g>
      <g fill="#f0f0ee" fontFamily="Open Sans, sans-serif" fontWeight="700" fontSize="23" textAnchor="middle">
        <text x="591" y="975">B</text>
        <text x="530" y="1034.500">L</text>
        <text x="591" y="1034.500">T</text>
        <text x="652" y="1034.500">R</text>
        <text x="591" y="1097.500">F</text>
      </g>
    </svg>
  );
}

export default function App() {
  return (
    <div className="flex h-[1135px] w-[2556px] flex-col overflow-hidden bg-[#323232] font-['Open_Sans','Noto_Sans',sans-serif] text-[#ececec]">
      <TitleBar />
      <Tabs />
      <Ribbon />
      <div className="flex h-[928px]">
        <ComponentGraph />
        <main className="relative ml-[6px] h-[925px] w-[1626px] shrink-0 overflow-hidden">
          <Scene />
          <PlayBar />
          <SideBar />
          <NavCube />
        </main>
        <div className="w-[6px] shrink-0" />
        <PropertyPanel />
      </div>
    </div>
  );
}
